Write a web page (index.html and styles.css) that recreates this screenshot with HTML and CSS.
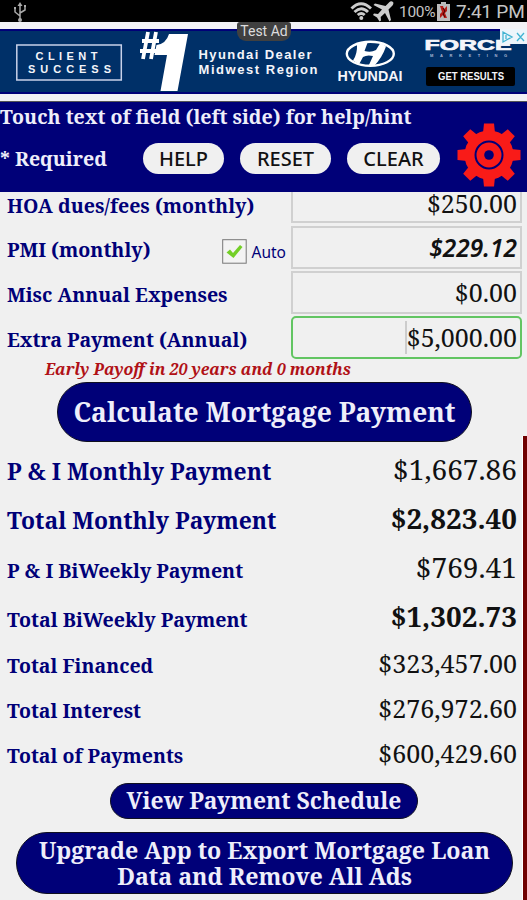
FILE: index.html
```html
<!DOCTYPE html>
<html lang="en">
<head>
  <meta charset="UTF-8">
  <meta name="viewport" content="width=device-width, initial-scale=1.0">
  <title>Mortgage Calculator</title>
  <link rel="stylesheet" href="styles.css">
</head>
<body>
  <div class="status">
    <svg class="usb" width="14" height="20" viewBox="0 0 14 20" fill="none" stroke="#aaa" stroke-width="1.500">
      <path d="M7 2v16M7 14L2 10V6M7 11l5-3V5"/>
      <path d="M7 0l2.500 4h-5zM1 5h2v2H1zM11 3h2v2h-2z" fill="#aaa" stroke="none"/>
      <circle cx="7" cy="18" r="2" fill="#aaa" stroke="none"/>
    </svg>
    <svg width="23" height="20" viewBox="0 0 23 20" fill="none" stroke="#ccc" stroke-width="2.900">
      <path d="M1.500 7.500Q11 -2 21 7.500M4.500 11Q11.300 4.500 18 11M7.700 14Q11.300 11 14.700 14"/>
      <circle cx="11.300" cy="17" r="2" fill="#ccc" stroke="none"/>
    </svg>
    <svg width="21" height="21" viewBox="0 0 21 21" fill="#ccc">
      <path d="M20 1q-2-1.500-4 .5L12.500 5 2 2.500.5 4 9 8.500 5 13l-4-.5L0 14l4 2.500L6.500 20.500 8 19.500 7.700 16 12 12l4.500 8.500 1.500-1.500L15.500 8.500 19.500 4.500q1.500-2 .5-3.500z"/>
    </svg>
    <span class="percent">100%</span>
    <svg class="battery" width="13" height="19" viewBox="0 0 13 19">
      <path d="M4 0h5v2h4v17H0V2h4z" fill="#bbb"/>
      <path d="M3 4h3l1 3 3-3v5l-2 2 2 5H7l-1-3-3 3v-4l2-2z" fill="#b51c16"/>
      <path d="M6 6l2 3-2 3 2 3" stroke="#400" fill="none"/>
    </svg>
    <span class="clock">7:41 PM</span>
  </div>

  <div class="ad">
    <svg width="527" height="65" viewBox="0 29 527 65">
      <rect y="29" width="527" height="65" fill="#000078"/>
      <rect y="31" width="527" height="61" fill="#003068"/>
      <rect x="16.800" y="45" width="104.500" height="35" fill="none" stroke="#c8d1e9" stroke-width="1.500"/>
      <g class="ad-bold">
        <text x="35.500" y="60" font-size="11" textLength="62" lengthAdjust="spacing">CLIENT</text>
        <text x="28" y="72.500" font-size="11" textLength="83" lengthAdjust="spacing">SUCCESS</text>
        <text x="198.500" y="58.500" font-size="13" textLength="113">Hyundai Dealer</text>
        <text x="198.500" y="73.500" font-size="13" textLength="119">Midwest Region</text>
        <text x="337.500" y="80.500" font-size="14" textLength="65" lengthAdjust="spacingAndGlyphs">HYUNDAI</text>
        <text class="force" x="424.500" y="49.500" font-size="15" textLength="87" lengthAdjust="spacingAndGlyphs">FORCE</text>
        <text class="tiny" x="430" y="56.500" font-size="4" textLength="77">MARKETING</text>
      </g>
      <path d="M148 32l-5 27M156 32l-5 27M142 41h17M140 51h17" fill="none" stroke="#fff" stroke-width="3.800"/>
      <path d="M169 34h19l-10.500 57H160.500l6.500-36H154.500l2-10Q166 44 169 34z" fill="#fff"/>
      <ellipse cx="370.300" cy="53.800" rx="23.500" ry="12" fill="none" stroke="#fff" stroke-width="2.400"/>
      <path d="M357 44.500Q363 41.500 368 41.500L364.500 51Q371 53 376 50L380 43.500Q384 44 386 46.500Q382 58 374 66L368.500 66L373 56Q367 54.500 363 57L359.500 63.500Q356 63 353 60.500Q357.500 54 357 44.500z" fill="#fff"/>
      <rect x="426" y="67" width="89" height="19" rx="2" fill="#000"/>
      <text class="ad-bold" x="438" y="80" font-size="10" textLength="66" lengthAdjust="spacingAndGlyphs">GET RESULTS</text>
      <rect x="500" y="29" width="27" height="15" fill="#edf5fb"/>
      <path d="M503 32l9 5-9 5zM506 35v4M517 33l7 8M524 33l-7 8" fill="none" stroke="#41b3d2" stroke-width="1.300"/>
    </svg>
    <span class="test-ad">Test Ad</span>
  </div>

  <div class="header">
    <div class="hint">Touch text of field (left side) for help/hint</div>
    <div class="toolbar">
      <span class="required">* Required</span>
      <button class="pill help">HELP</button>
      <button class="pill reset">RESET</button>
      <button class="pill clear">CLEAR</button>
      <svg class="gear" width="64" height="64" viewBox="-32 -32 64 64">
        <g fill="#f91b18">
          <circle r="24.500"/>
          <path id="teeth" d="M-6-22l1-9.500H5L6-22V22L5 31.500H-5L-6 22z"/>
          <use href="#teeth" transform="rotate(45)"/>
          <use href="#teeth" transform="rotate(90)"/>
          <use href="#teeth" transform="rotate(135)"/>
        </g>
        <circle r="13.500" fill="none" stroke="#000078" stroke-width="2"/>
        <circle r="4.800" fill="#000078"/>
      </svg>
    </div>
  </div>

  <div class="form">
    <div class="row first"><span class="label">HOA dues/fees (monthly)</span><div class="field">$250.00</div></div>
    <div class="row">
      <span class="label">PMI (monthly)</span>
      <span class="auto">
        <svg width="25" height="25" viewBox="0 0 25 25">
          <rect x=".7" y=".7" width="23.500" height="23.500" fill="#f3f3f3" stroke="#777"/>
          <path d="M4.500 13.500L8 10.500L11 14L18 6L20.500 8L11.500 19Z" fill="#73cf27"/>
        </svg>
        Auto
      </span>
      <div class="field computed">$229.12</div>
    </div>
    <div class="row"><span class="label">Misc Annual Expenses</span><div class="field">$0.00</div></div>
    <div class="row"><span class="label">Extra Payment (Annual)</span><div class="field active"><span class="caret"></span>$5,000.00</div></div>
    <div class="payoff">Early Payoff in 20 years and 0 months</div>
    <button class="action calculate">Calculate Mortgage Payment</button>

    <div class="results">
      <div class="result large"><span>P &amp; I Monthly Payment</span><span class="amount">$1,667.86</span></div>
      <div class="result large"><span>Total Monthly Payment</span><b class="amount">$2,823.40</b></div>
      <div class="result biweekly"><span>P &amp; I BiWeekly Payment</span><span class="amount">$769.41</span></div>
      <div class="result biweekly"><span>Total BiWeekly Payment</span><b class="amount">$1,302.73</b></div>
      <div class="result small"><span>Total Financed</span><span class="amount">$323,457.00</span></div>
      <div class="result small"><span>Total Interest</span><span class="amount">$276,972.60</span></div>
      <div class="result small"><span>Total of Payments</span><span class="amount">$600,429.60</span></div>
    </div>
    <button class="action schedule">View Payment Schedule</button>
    <button class="action upgrade">Upgrade App to Export Mortgage Loan<br>Data and Remove All Ads</button>
    <div class="scrollbar"></div>
  </div>
</body>
</html>
```
FILE: styles.css
```css
* { box-sizing: border-box; }
body { margin: 0; width: 527px; height: 900px; overflow: hidden; background: #f0f0f0; font-family: "Noto Serif", "DejaVu Serif", serif; }
button { border: 0; padding: 0; font-family: inherit; }
svg { display: block; flex: none; }

.status { height: 22px; background: #000; color: #c4c4c4; display: flex; align-items: center; padding-right: 5px; font-family: Roboto, sans-serif; }
.usb { margin: 2px auto 0 13px; }
.percent { font-size: 15.5px; margin: 1px 2px 0 5px; width: 36px; letter-spacing: -.3px; }
.battery { margin-right: 6px; }
.clock { font-size: 19px; line-height: 20px; width: 66px; white-space: nowrap; letter-spacing: -.2px; margin-top: 1px; }

.ad { position: relative; height: 80px; padding-top: 7px; background: #f2f2f5; border-bottom: 1px solid #555; }
.ad-bold { font-family: "Liberation Sans", Arial, sans-serif; font-weight: bold; fill: #f4f5fa; }
.force { stroke: #f4f5fa; stroke-width: .7px; }
.tiny { fill: #aab8d4; }
.test-ad { position: absolute; left: 237px; top: 0; width: 54px; height: 19px; border-radius: 3px 3px 9px 9px; background: #404040; color: #ddd; font: 14px/19px Roboto, sans-serif; text-align: center; }

.header { height: 90px; background: #000078; color: #eeeefa; font-weight: bold; }
.hint { height: 28px; line-height: 29px; font-size: 19.6px; white-space: nowrap; }
.toolbar { display: flex; align-items: center; height: 58px; }
.required { width: 143px; font-size: 19.6px; margin-top: -2px; }
.pill { height: 31px; border-radius: 16px; background: #f0f0f0; color: #111; font: 500 20px/29px "Noto Sans", sans-serif; margin-top: -2px; }
.help { width: 81px; }
.reset { width: 91px; margin-left: 16px; }
.clear { width: 93px; margin-left: 16px; }
.gear { margin: -9px 0 0 17px; }

.form { position: relative; height: 708px; overflow: hidden; }
.row { display: flex; align-items: center; height: 43px; margin: 0 5px 2px 7px; }
.first { height: 31px; margin-bottom: 3px; }
.label { font-size: 19.6px; font-weight: bold; color: #000078; white-space: nowrap; margin-top: 4px; }
.first .label { margin-top: -4px; }
.auto { display: flex; align-items: center; gap: 5px; margin: 8px 5px 0 auto; color: #000078; font: 15.5px "Noto Sans", sans-serif; }
.field { width: 231px; height: 43px; margin-left: auto; border: 2px solid #d0d0d0; padding-right: 3px; display: flex; align-items: center; justify-content: flex-end; font-size: 25px; line-height: 25px; color: #111; }
.auto + .field { margin-left: 0; }
.first .field { border-top: 0; height: 31px; padding-bottom: 6px; }
.computed { font: italic 600 24.5px "Noto Sans", sans-serif; }
.active { border: 2px solid #62c562; border-radius: 5px; }
.caret { width: 2px; height: 33px; background: #ccc; }
.payoff { height: 20px; margin-top: -2px; line-height: 20px; padding-left: 45px; color: #b01116; font-size: 15.9px; font-weight: bold; font-style: italic; white-space: nowrap; }
.action { display: block; background: #000078; color: #eeeefa; border: 1px solid #101020; font-weight: bold; white-space: nowrap; }
.calculate { width: 415px; height: 60px; margin: 3px 0 0 57px; border-radius: 30px; font-size: 26.4px; }

.results { padding: 4px 10px 0 7px; color: #000078; font-weight: bold; }
.result { height: 49px; display: flex; align-items: center; justify-content: space-between; font-size: 19.6px; white-space: nowrap; }
.biweekly > :first-child { margin-top: 2px; }
.large { height: 50px; font-size: 22.9px; }
.large + .large { height: 49px; }
.amount { color: #111; font-size: 28.1px; font-weight: normal; margin-top: -5px; }
b.amount { font-weight: bold; font-size: 27.8px; }
.small { height: 45px; font-size: 19.5px; }
.small .amount { font-size: 25.1px; }
.schedule { width: 308px; height: 36px; margin: 5px 0 0 110px; border-radius: 18px; font-size: 22.9px; line-height: 34px; }
.upgrade { width: 497px; height: 62px; margin: 13px 0 0 16px; border-radius: 31px; font-size: 23.2px; line-height: 26px; }
.scrollbar { position: absolute; right: 0; top: 244px; width: 5px; height: 464px; background: #700000; border-left: 1px solid #fff; }
```
